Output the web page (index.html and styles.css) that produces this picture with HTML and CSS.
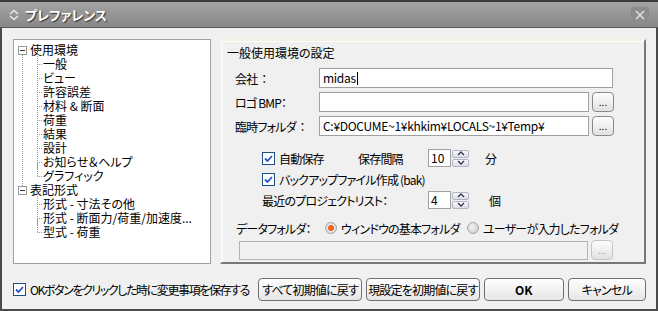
FILE: index.html
```html
<!DOCTYPE html>
<html lang="ja">
<head>
    <meta charset="UTF-8">
    <title>プレファレンス</title>
    <link rel="stylesheet" href="styles.css">
</head>
<body>
    <div class="window">
        <div class="titlebar">
            <svg class="title-icon" width="10" height="12" viewBox="0 0 10 12">
                <path d="M1 5 L5 1.5 L9 5" fill="none" stroke="#e8e8e8" stroke-width="1.6"/>
                <path d="M1 7 L5 10.5 L9 7" fill="none" stroke="#e8e8e8" stroke-width="1.6"/>
            </svg>
            <span class="title-text">プレファレンス</span>
            <span class="title-close">
                <svg width="12" height="12" viewBox="0 0 12 12">
                    <path d="M2 2 L10 10 M10 2 L2 10" stroke="#e0e0e0" stroke-width="1.6"/>
                </svg>
            </span>
        </div>

        <div class="content">
            <!-- tree on the left -->
            <div class="tree">
                <ul class="tree-root">
                    <li class="node">
                        <span class="toggle"></span><span class="label">使用環境</span>
                        <ul class="children">
                            <li>一般</li>
                            <li>ビュー</li>
                            <li>許容誤差</li>
                            <li>材料 &amp; 断面</li>
                            <li>荷重</li>
                            <li>結果</li>
                            <li>設計</li>
                            <li>お知らせ＆ヘルプ</li>
                            <li class="last">グラフィック</li>
                        </ul>
                    </li>
                    <li class="node last">
                        <span class="toggle"></span><span class="label">表記形式</span>
                        <ul class="children">
                            <li>形式 - 寸法その他</li>
                            <li>形式 - 断面力/荷重/加速度...</li>
                            <li class="last">型式 - 荷重</li>
                        </ul>
                    </li>
                </ul>
            </div>

            <!-- settings panel -->
            <div class="panel">
                <div class="panel-title">一般使用環境の設定</div>

                <div class="field-row">
                    <span class="field-label">会社&nbsp; ：</span>
                    <div class="textbox wide">midas<span class="caret"></span></div>
                </div>
                <div class="field-row">
                    <span class="field-label">ロゴ&nbsp;BMP：</span>
                    <div class="textbox"></div>
                    <button class="dots">...</button>
                </div>
                <div class="field-row">
                    <span class="field-label">臨時フォルダ&nbsp; ：</span>
                    <div class="textbox">C:¥DOCUME~1¥khkim¥LOCALS~1¥Temp¥</div>
                    <button class="dots">...</button>
                </div>

                <div class="options">
                    <div class="opt-row">
                        <span class="check-item w96"><span class="checkbox"></span>自動保存</span>
                        <span class="w70">保存間隔</span>
                        <span class="spinner">
                            <span class="spin-value">10</span>
                            <span class="spin-buttons">
                                <span class="spin-btn"><svg width="8" height="5" viewBox="0 0 8 5"><path d="M1 4 L4 1 L7 4" fill="none" stroke="#334" stroke-width="1.3"/></svg></span>
                                <span class="spin-btn"><svg width="8" height="5" viewBox="0 0 8 5"><path d="M1 1 L4 4 L7 1" fill="none" stroke="#334" stroke-width="1.3"/></svg></span>
                            </span>
                        </span>
                        <span class="unit">分</span>
                    </div>
                    <div class="opt-row">
                        <span class="check-item"><span class="checkbox"></span>バックアップファイル作成&nbsp;(bak)</span>
                    </div>
                    <div class="opt-row">
                        <span class="w166">最近のプロジェクトリスト：</span>
                        <span class="spinner">
                            <span class="spin-value">4</span>
                            <span class="spin-buttons">
                                <span class="spin-btn"><svg width="8" height="5" viewBox="0 0 8 5"><path d="M1 4 L4 1 L7 4" fill="none" stroke="#334" stroke-width="1.3"/></svg></span>
                                <span class="spin-btn"><svg width="8" height="5" viewBox="0 0 8 5"><path d="M1 1 L4 4 L7 1" fill="none" stroke="#334" stroke-width="1.3"/></svg></span>
                            </span>
                        </span>
                        <span class="unit unit-wide">個</span>
                    </div>
                </div>

                <div class="folder-row">
                    <span class="folder-label">データフォルダ：</span>
                    <span class="radio-item w142"><span class="radio on"></span>ウィンドウの基本フォルダ</span>
                    <span class="radio-item"><span class="radio"></span>ユーザーが入力したフォルダ</span>
                </div>
                <div class="folder-path">
                    <div class="textbox disabled"></div>
                    <button class="dots disabled">...</button>
                </div>
            </div>
        </div>

        <div class="footer">
            <span class="check-item save-check"><span class="checkbox"></span>OKボタンをクリックした時に変更事項を保存する</span>
            <button class="btn reset-all">すべて初期値に戻す</button>
            <button class="btn reset-cur">現設定を初期値に戻す</button>
            <button class="btn ok">OK</button>
            <button class="btn cancel">キャンセル</button>
        </div>
    </div>
</body>
</html>
```

FILE: styles.css
```css
/* Preference dialog */
body {
    margin: 0;
    padding: 0;
    font-family: "Noto Sans CJK JP", "Liberation Sans", sans-serif;
    font-size: 12px;
    font-feature-settings: "palt";
    letter-spacing: -0.8px;
    color: #000;
    background-color: #f0f0f0;
}

.window {
    width: 658px;
    height: 311px;
    box-sizing: border-box;
    border: 2px solid #4a4a4a;
    border-top: none;
    background-color: #f0f0f0;
    display: flex;
    flex-direction: column;
}

/* title bar */
.titlebar {
    height: 28px;
    box-sizing: border-box;
    border-top: 2px solid #3a3a3a;
    border-bottom: 1px solid #555;
    background: linear-gradient(#a4a4a4, #878787);
    display: flex;
    align-items: center;
    padding-left: 9px;
    margin: 0 -2px;
}

.title-icon {
    margin-right: 6px;
}

.title-text {
    color: #fff;
    font-weight: bold;
    font-size: 13px;
    letter-spacing: 0;
    text-shadow: 1px 1px 1px #333;
    flex: 1;
}

.title-close {
    width: 18px;
    height: 16px;
    background-color: #8c8c8c;
    display: flex;
    align-items: center;
    justify-content: center;
    margin-right: 9px;
}

/* main area */
.content {
    display: flex;
    padding: 11px 10px 0 11px;
    gap: 9px;
}

.tree {
    width: 198px;
    height: 225px;
    box-sizing: border-box;
    border: 1px solid #a0a0a0;
    background-color: #fff;
    padding-top: 3px;
    letter-spacing: 0;
}

.tree ul {
    list-style: none;
    margin: 0;
    padding: 0;
}

.tree li {
    line-height: 14px;
    white-space: nowrap;
}

.tree-root {
    padding-left: 4px !important;
}

.node {
    position: relative;
}

.node:not(.last)::before {
    content: "";
    position: absolute;
    left: 4px;
    top: 11px;
    bottom: -3px;
    border-left: 1px dotted #999;
}

.toggle {
    display: inline-block;
    width: 7px;
    height: 7px;
    border: 1px solid #999;
    background-color: #fff;
    margin-right: 3px;
    vertical-align: 0;
    position: relative;
    z-index: 1;
}

.toggle::after {
    content: "";
    position: absolute;
    left: 1px;
    top: 3px;
    width: 5px;
    border-top: 1px solid #333;
}

.children {
    padding-left: 19px !important;
}

.children li {
    position: relative;
    padding-left: 6px;
}

.children li::before {
    content: "";
    position: absolute;
    left: 0;
    top: 7px;
    width: 5px;
    border-top: 1px dotted #999;
}

.children li::after {
    content: "";
    position: absolute;
    left: 0;
    top: -7px;
    height: 14px;
    border-left: 1px dotted #999;
}

.children li:not(.last)::after {
    height: 21px;
}

/* right panel */
.panel {
    width: 426px;
    height: 225px;
    box-sizing: border-box;
    border-top: 2px solid #f4efe0;
    border-left: 2px solid #f6f3ea;
    border-right: 2px solid #777;
    border-bottom: 2px solid #777;
    box-shadow: inset 1px 1px 0 #fff;
    padding: 4px 0 0 5px;
}

.panel-title {
    line-height: 16px;
    margin-bottom: 7px;
    letter-spacing: 0;
}

.field-row {
    display: flex;
    align-items: center;
    height: 20px;
    margin-bottom: 4px;
    padding-left: 8px;
}

.field-label {
    width: 84px;
    flex-shrink: 0;
    white-space: nowrap;
}

.textbox {
    width: 270px;
    height: 20px;
    box-sizing: border-box;
    border: 1px solid #a0a0a0;
    background-color: #fff;
    padding: 0 3px;
    line-height: 18px;
    letter-spacing: -0.3px;
    white-space: nowrap;
    overflow: hidden;
}

.textbox.wide {
    width: 294px;
}

.caret {
    display: inline-block;
    width: 1px;
    height: 13px;
    background-color: #000;
    vertical-align: -2px;
    margin-left: 1px;
}

.dots {
    width: 22px;
    height: 20px;
    margin-left: 3px;
    padding: 0;
    border: 1px solid #8a8a8a;
    border-radius: 4px;
    background: linear-gradient(#fdfdfd, #e2e2e2);
    font-family: inherit;
    font-size: 10px;
    line-height: 14px;
    letter-spacing: 0;
    color: #000;
}

.dots.disabled {
    border-color: #c4c4c4;
    color: #8aa0d0;
}

.textbox.disabled {
    width: 349px;
    height: 19px;
    background-color: #f0f0f0;
    border-color: #b4b4b4;
}

/* checkboxes and spinners */
.options {
    padding-left: 35px;
    margin-top: 12px;
}

.opt-row {
    display: flex;
    align-items: center;
    height: 20px;
    margin-bottom: 1px;
}

.check-item {
    display: inline-flex;
    align-items: center;
    white-space: nowrap;
}

.checkbox {
    width: 11px;
    height: 11px;
    border: 1px solid #1c5180;
    background: #fff url("data:image/svg+xml;utf8,<svg xmlns='http://www.w3.org/2000/svg' width='11' height='11'><path d='M2 5.5 L4.5 8 L9 3' fill='none' stroke='%232a4fc8' stroke-width='1.8'/></svg>") no-repeat center;
    margin-right: 4px;
    flex-shrink: 0;
}

.w96 { width: 96px; }
.w70 { width: 70px; }
.w166 { width: 166px; }
.w142 { width: 142px; }

.spinner {
    display: inline-flex;
    align-items: center;
}

.spin-value {
    width: 23px;
    height: 18px;
    box-sizing: border-box;
    border: 1px solid #a0a0a0;
    background-color: #fff;
    padding-left: 2px;
    line-height: 16px;
    letter-spacing: 0;
}

.spin-buttons {
    display: flex;
    flex-direction: column;
    gap: 1px;
    margin-left: 1px;
}

.spin-btn {
    width: 17px;
    height: 8px;
    box-sizing: border-box;
    border: 1px solid #b0b4c4;
    border-radius: 2px;
    background: linear-gradient(#f8f8fc, #dcdde6);
    display: flex;
    align-items: center;
    justify-content: center;
}

.unit {
    margin-left: 16px;
}

.unit-wide {
    margin-left: 20px;
}

/* data folder */
.folder-row {
    display: flex;
    align-items: center;
    height: 18px;
    margin-top: 9px;
    padding-left: 9px;
}

.folder-label {
    width: 89px;
}

.radio-item {
    display: inline-flex;
    align-items: center;
    white-space: nowrap;
}

.radio {
    width: 12px;
    height: 12px;
    border-radius: 50%;
    box-sizing: border-box;
    border: 1px solid #a8a8a8;
    background: radial-gradient(circle at 40% 40%, #f4f4f4, #c4c4c4);
    margin-right: 4px;
}

.radio.on {
    background: radial-gradient(circle, #ff7a2a 0, #f05a10 2.5px, #e8e8e8 3.5px, #d0d0d0 6px);
}

.folder-path {
    display: flex;
    align-items: center;
    margin-top: 3px;
    padding-left: 12px;
}

/* footer */
.footer {
    display: flex;
    align-items: center;
    padding: 14px 10px 0 11px;
}

.save-check {
    width: 243px;
    letter-spacing: -1.4px;
}

.btn {
    height: 23px;
    padding: 0;
    border: 1px solid #707070;
    border-radius: 4px;
    background: linear-gradient(#fefefe, #e6e6e6);
    font-family: inherit;
    font-size: 12px;
    font-feature-settings: "palt";
    letter-spacing: -0.8px;
    white-space: nowrap;
    color: #000;
    margin-left: 4px;
}

.reset-all { width: 104px; }
.reset-cur { width: 115px; }
.ok { width: 80px; font-weight: bold; letter-spacing: 0; }
.cancel { width: 79px; }
```
